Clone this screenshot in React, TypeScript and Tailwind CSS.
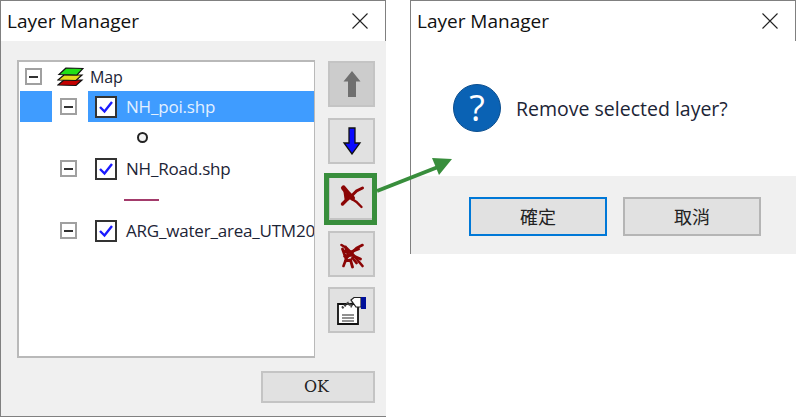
import React from 'react';

const uiFont = "font-['Open_Sans','Noto_Sans',sans-serif]";

function CloseIcon() {
  return (
    <svg width="18" height="18" viewBox="0 0 18 18" className="text-[#222]">
      <path d="M1.5 1.5 L16.5 16.5 M16.5 1.5 L1.5 16.5" stroke="currentColor" strokeWidth="1.1" fill="none" />
    </svg>
  );
}

function TitleBar() {
  return (
    <div className="flex items-center justify-between h-[40px] shrink-0 bg-white pl-[6px] pr-[16px] border-r border-[#808080]">
      <span className={`${uiFont} text-[19px] text-[#111]`}>Layer Manager</span>
      <CloseIcon />
    </div>
  );
}

function Expander() {
  return (
    <div className="w-[17px] h-[17px] shrink-0 border-2 border-[#a0a0a0] bg-white flex items-center justify-center">
      <div className="w-[9px] h-[2px] bg-[#333]" />
    </div>
  );
}

function Check() {
  return (
    <div className="w-[22px] h-[22px] shrink-0 border-2 border-[#333] bg-white flex items-center justify-center">
      <svg width="16" height="14" viewBox="0 0 16 14">
        <path d="M2 7 L6.5 11.5 L14 2" stroke="#1a1aff" strokeWidth="2.4" fill="none" />
      </svg>
    </div>
  );
}

function LayerRow({ name, selected }: { name: string; selected?: boolean }) {
  return (
    <div className="flex items-center h-[31px]">
      <div className={`w-[32px] h-full ml-px mr-[8px] shrink-0 ${selected ? 'bg-[#3f9cff]' : ''}`} />
      <Expander />
      <div className={`flex items-center h-full ml-[11px] pl-[7px] flex-1 min-w-0 ${selected ? 'bg-[#3f9cff]' : ''}`}>
        <Check />
        <span className={`${uiFont} ml-[9px] text-[17px] whitespace-nowrap tracking-[-0.2px] ${selected ? 'text-[#e3f0ff]' : 'text-[#1c2436]'}`}>{name}</span>
      </div>
    </div>
  );
}

function LayersIcon() {
  return (
    <svg width="27" height="20" viewBox="0 0 27 20">
      <path d="M7 13 L1 18 L19 18.500 L25 13 Z" fill="#c40000" stroke="#111" strokeWidth="1.200" />
      <path d="M7 8 L1 13 L19 13.500 L25 8 Z" fill="#e6dc1e" stroke="#111" strokeWidth="1.200" />
      <path d="M9 1 L2 7.500 L20 8 L26 1.500 Z" fill="#22e016" stroke="#111" strokeWidth="1.200" />
    </svg>
  );
}

function ToolButton({ children, disabled, marked }: { children: React.ReactNode; disabled?: boolean; marked?: boolean }) {
  return (
    <div className={`relative w-[47px] h-[46px] border-2 border-[#c4c4c4] flex items-center justify-center ${disabled ? 'bg-[#cccccc]' : 'bg-[#e1e1e1]'}`}>
      {children}
      {marked && <div className="absolute left-[-6px] top-[-3px] w-[53px] h-[52px] border-[5px] border-[#388e3c]" />}
    </div>
  );
}

function UpIcon() {
  return (
    <svg width="20" height="28" viewBox="0 0 20 28">
      <path d="M10 1 L18.500 11.500 L14 11.500 L14 27 L6 27 L6 11.500 L1.500 11.500 Z" fill="#6f6f6f" />
    </svg>
  );
}

function DownIcon() {
  return (
    <svg width="20" height="28" viewBox="0 0 20 28">
      <path d="M7 1 L13 1 L13 16 L18 16 L10 27 L2 16 L7 16 Z" fill="#0a0aff" stroke="#111" strokeWidth="1.300" />
    </svg>
  );
}

function RemoveIcon() {
  return (
    <svg width="34" height="32" viewBox="-1.500 -1 34 32">
      <g stroke="#8b0505" fill="none" strokeLinecap="round">
        <path d="M7 6 L12 12 L16 16" strokeWidth="5" />
        <path d="M14 16 L20 20 L25 25" strokeWidth="2.400" />
        <path d="M26 6 L20 9 L15 14" strokeWidth="3" />
        <path d="M15 14 L10 18 L6 22" strokeWidth="3.400" />
        <path d="M9 10 L10 17" strokeWidth="4" />
      </g>
    </svg>
  );
}

function RemoveAllIcon() {
  return (
    <svg width="34" height="34" viewBox="-1.500 -2 34 34">
      <g stroke="#8b0505" fill="none" strokeLinecap="round">
        <path d="M5 6 L10 9 L16 15 L21 21 L26 27" strokeWidth="2.600" />
        <path d="M26 6 L20 9 L15 14 L10 19 L7 27" strokeWidth="2.600" />
        <path d="M7 12 L14 13 L22 10 M8 17 L15 16 L24 20 M9 22 L14 21 L16 28 M9 8 L11 14 M16 19 L20 24 M6 10 L10 21" strokeWidth="2.800" />
      </g>
    </svg>
  );
}

function PropertiesIcon() {
  return (
    <svg width="36" height="34" viewBox="0 0 36 34">
      <path d="M4 11 H24 V31 H4 Z" fill="#fff" stroke="#111" strokeWidth="1.800" />
      <path d="M8 22 H20 M8 25 H20 M8 28 H20" stroke="#222" strokeWidth="1.200" />
      <path d="M8 15 L14 10 L17 13 L20 8 L23 14" stroke="#444" strokeWidth="2.400" fill="none" strokeDasharray="2 1" />
      <path d="M17 7 L20 4.500 L27 4.500 L27 14 L22 14 Z" fill="#fff" stroke="#222" strokeWidth="1.200" />
      <rect x="27" y="4" width="5" height="12" fill="#00109a" />
    </svg>
  );
}

function QuestionIcon() {
  return (
    <div className="w-[48px] h-[48px] rounded-full bg-[#0a62b4] border border-[#0d4f8f] flex items-center justify-center shrink-0">
      <span className={`${uiFont} text-[36px] leading-none text-white`}>?</span>
    </div>
  );
}

function DialogButton({ label, focused }: { label: string; focused?: boolean }) {
  return (
    <div className={`w-[138px] h-[39px] flex items-center justify-center bg-[#e1e1e1] border-2 ${focused ? 'border-[#0078d7]' : 'border-[#b5b5b5]'} font-['Noto_Sans_CJK_TC',sans-serif] text-[18px] text-[#222]`}>
      {label}
    </div>
  );
}

export default function App() {
  return (
    <div className="relative w-[796px] h-[417px] bg-white overflow-hidden flex items-start gap-[24px]">
      {/* Layer list window */}
      <div className="w-[386px] h-[417px] flex flex-col border-t border-l border-b border-[#808080]">
        <TitleBar />
        <div className="flex-1 bg-[#f0f0f0] pl-[16px] pr-[11px] pt-[19px] flex flex-col">
          <div className="flex gap-[13px]">
            <div className="w-[298px] h-[298px] bg-white border-2 border-r border-[#b9b9b9] overflow-hidden">
              <div className="flex items-center h-[29px] pl-[6px]">
                <Expander />
                <div className="ml-[15px]">
                  <LayersIcon />
                </div>
                <span className={`${uiFont} ml-[6px] text-[16px] text-[#1c2436] tracking-[-0.2px]`}>Map</span>
              </div>
              <LayerRow name="NH_poi.shp" selected />
              <div className="flex items-center h-[31px] pl-[118px]">
                <div className="w-[11px] h-[11px] rounded-full border-2 border-[#222] bg-[#f4f4f4]" />
              </div>
              <LayerRow name="NH_Road.shp" />
              <div className="flex items-center h-[31px] pl-[105px] pt-px">
                <div className="w-[35px] h-[2px] bg-[#a33b6b]" />
              </div>
              <LayerRow name="ARG_water_area_UTM20" />
            </div>
            <div className="flex flex-col gap-[10.500px] pt-px">
              <ToolButton disabled><UpIcon /></ToolButton>
              <ToolButton><DownIcon /></ToolButton>
              <ToolButton marked><RemoveIcon /></ToolButton>
              <ToolButton><RemoveAllIcon /></ToolButton>
              <ToolButton><PropertiesIcon /></ToolButton>
            </div>
          </div>
          <div className="flex justify-end mt-[13px]">
            <div className="w-[114px] h-[32px] pr-[3px] bg-[#e1e1e1] border-2 border-[#c4c4c4] flex items-center justify-center font-['DejaVu_Serif',serif] text-[16px] text-[#222]">
              OK
            </div>
          </div>
        </div>
      </div>

      {/* Confirm dialog */}
      <div className="w-[386px] h-[254px] flex flex-col border-t border-l border-[#808080]">
        <TitleBar />
        <div className="flex-1 bg-white flex items-start pl-[42px] pt-[43px] gap-[15px]">
          <QuestionIcon />
          <span className={`${uiFont} mt-[10px] text-[19.500px] text-[#1c2436]`}>Remove selected layer?</span>
        </div>
        <div className="h-[78px] bg-[#f0f0f0] flex gap-[16px] pl-[58px] pt-[21px]">
          <DialogButton label="確定" focused />
          <DialogButton label="取消" />
        </div>
      </div>

      {/* Callout arrow between the two windows */}
      <svg className="absolute left-[376px] top-[154px]" width="82" height="42" viewBox="0 0 82 42">
        <path d="M1 37 L62 13" stroke="#388e3c" strokeWidth="4" fill="none" />
        <path d="M76 5 L56 4 L63 21 Z" fill="#388e3c" />
      </svg>
    </div>
  );
}
